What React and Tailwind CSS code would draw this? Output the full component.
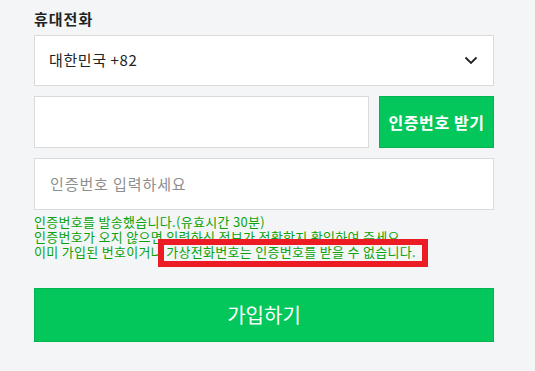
export default function App() {
  return (
    <main className="min-h-[371px] w-[535px] bg-[#f4f5f7] pl-[34px] font-['Noto_Sans_CJK_KR',sans-serif]">
      <div className="w-[460px]">
        <h2 className="pt-[8px] text-[15px] font-bold leading-[22px] tracking-[1px] text-[#222]">휴대전화</h2>

        <div className="mt-[5px] flex h-[51px] items-center justify-between border border-[#dadada] bg-white pl-[14px] pr-[15px]">
          <span className="text-[15px] tracking-[0.6px] text-[#222]">대한민국 +82</span>
          <svg width="14" height="9" viewBox="0 0 14 9" fill="none">
            <path d="M1.5 1.5 L7 7 L12.5 1.5" stroke="#222" strokeWidth="1.8" />
          </svg>
        </div>

        <div className="mt-[10px] flex h-[52px] gap-[10px]">
          <div className="flex-1 border border-[#dadada] bg-white" />
          <button className="w-[115px] border border-[#02b552] bg-[#03c75a] text-[16px] font-bold tracking-[0.6px] text-white">
            인증번호 받기
          </button>
        </div>

        <div className="mt-[10px] flex h-[52px] items-center border border-[#dadada] bg-white pl-[15px]">
          <span className="text-[15px] tracking-[0.9px] text-[#8e8e8e]">인증번호 입력하세요</span>
        </div>

        <div className="relative mt-[4px] text-[13px] leading-[15px] tracking-[0.3px] text-[#0aa30a]">
          <p>인증번호를 발송했습니다.(유효시간 30분)</p>
          <p>인증번호가 오지 않으면 입력하신 정보가 정확한지 확인하여 주세요.</p>
          <p>이미 가입된 번호이거나 가상전화번호는 인증번호를 받을 수 없습니다.</p>
          <div className="absolute left-[124px] top-[25px] h-[28px] w-[270px] border-[6px] border-[#ed1c24]" />
        </div>

        <button className="mt-[29px] flex h-[54px] w-full items-center justify-center border border-[#02b552] bg-[#03c75a] text-[20px] text-white">
          가입하기
        </button>
      </div>
    </main>
  )
}
